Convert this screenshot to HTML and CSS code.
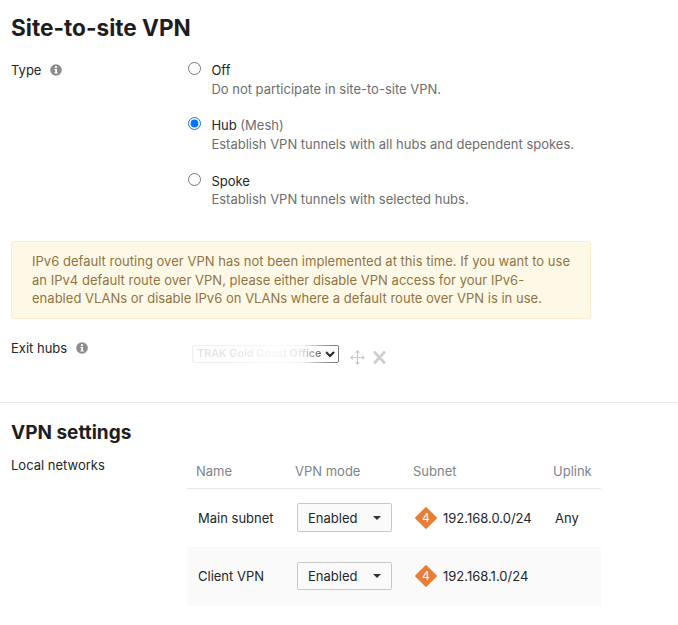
FILE: index.html
```html
<!DOCTYPE html>
<html lang="en">
<head>
    <meta charset="UTF-8">
    <meta name="viewport" content="width=device-width, initial-scale=1.0">
    <title>Site-to-site VPN</title>
    <link rel="stylesheet" href="styles.css">
</head>
<body>
    <!--* Type and exit hubs -->
    <div class="vpnSection">
      <h1>Site-to-site VPN</h1>
      <div class="formRow typeRow">
        <div class="rowLabel">
          <span>Type</span>
          <svg class="infoIcon" viewBox="0 0 12 12"><circle cx="6" cy="6" r="5.8" fill="#8c8c8c"/><rect x="5" y="2.2" width="2" height="1.8" fill="#fff"/><path d="M4.4 5h2.6v3.6h.8v1H4.4v-1h.8V6h-.8z" fill="#fff"/></svg>
        </div>
        <div class="radioList">
          <label class="radioItem">
            <input type="radio" name="vpnType">
            <span class="radioText">
              <span class="radioName">Off</span>
              <span class="radioHint">Do not participate in site-to-site VPN.</span>
            </span>
          </label>
          <label class="radioItem">
            <input type="radio" name="vpnType" checked>
            <span class="radioText">
              <span class="radioName">Hub <span class="radioNote">(Mesh)</span></span>
              <span class="radioHint">Establish VPN tunnels with all hubs and dependent spokes.</span>
            </span>
          </label>
          <label class="radioItem">
            <input type="radio" name="vpnType">
            <span class="radioText">
              <span class="radioName">Spoke</span>
              <span class="radioHint">Establish VPN tunnels with selected hubs.</span>
            </span>
          </label>
        </div>
      </div>
      <div class="warningBox">
        IPv6 default routing over VPN has not been implemented at this time. If you want to use
        an IPv4 default route over VPN, please either disable VPN access for your IPv6-
        enabled VLANs or disable IPv6 on VLANs where a default route over VPN is in use.
      </div>
      <div class="formRow exitRow">
        <div class="rowLabel">
          <span>Exit hubs</span>
          <svg class="infoIcon" viewBox="0 0 12 12"><circle cx="6" cy="6" r="5.8" fill="#8c8c8c"/><rect x="5" y="2.2" width="2" height="1.8" fill="#fff"/><path d="M4.4 5h2.6v3.6h.8v1H4.4v-1h.8V6h-.8z" fill="#fff"/></svg>
        </div>
        <div class="hubPicker">
          <select class="hubSelect"><option>TRAK Gold Coast Office</option></select>
          <svg class="moveIcon" viewBox="0 0 16 16"><path d="M8 2v12M2 8h12" fill="none" stroke="#c8c8c8" stroke-width="1.2"/><path d="M8 0l2.6 3H5.4zM8 16l2.6-3H5.4zM0 8l3-2.6v5.2zM16 8l-3-2.6v5.2z" fill="#c8c8c8"/></svg>
          <svg class="removeIcon" viewBox="0 0 13 13" fill="none" stroke="#cfcfcf" stroke-width="2.8"><path d="M1 .5l11 12M12 .5L1 12.5"/></svg>
        </div>
      </div>
    </div>
    <!--* VPN settings -->
    <div class="settingsSection">
      <h2>VPN settings</h2>
      <div class="formRow networksRow">
        <div class="rowLabel">Local networks</div>
        <table class="netTable">
          <thead>
            <tr><th class="nameCol">Name</th><th class="modeCol">VPN mode</th><th class="subnetCol">Subnet</th><th>Uplink</th></tr>
          </thead>
          <tbody>
            <tr>
              <td class="nameCell">Main subnet</td>
              <td><div class="modeButton">Enabled<span class="caret"></span></div></td>
              <td><div class="subnetCell"><span class="ipBadge"><span class="ipDigit">4</span></span>192.168.0.0/24</div></td>
              <td class="uplinkCell">Any</td>
            </tr>
            <tr class="altRow">
              <td class="nameCell">Client VPN</td>
              <td><div class="modeButton">Enabled<span class="caret"></span></div></td>
              <td><div class="subnetCell"><span class="ipBadge"><span class="ipDigit">4</span></span>192.168.1.0/24</div></td>
              <td></td>
            </tr>
          </tbody>
        </table>
      </div>
    </div>
</body>
</html>
```
FILE: styles.css
```css
:root {
    --text-color: #22262a;
    --hint-color: #6e6e6e;
    --head-color: #80838a;
    --line-color: #e8e8e8;
}
body {
    margin: 0;
    font: 13px Inter, "Liberation Sans", sans-serif;
    color: var(--text-color);
    background-color: #fff;
    overflow: hidden;
}
h1 {
    margin: 0;
    padding-top: 14px;
    font-size: 22.6px;
    line-height: 27px;
    font-weight: 700;
    color: #1e1e1e;
}
h2 {
    margin: 0;
    font-size: 19px;
    line-height: 22px;
    font-weight: 700;
    color: #1e1e1e;
}
.vpnSection {
    padding-left: 11px;
    height: 403px;
    box-sizing: border-box;
    border-bottom: 1px solid var(--line-color);
}
.settingsSection {
    padding: 19px 0 0 11px;
}
.formRow {
    display: flex;
}
.typeRow {
    padding-top: 21px;
}
.exitRow {
    padding-top: 21px;
}
.networksRow {
    padding-top: 13px;
}
.rowLabel {
    width: 176px;
    flex-shrink: 0;
    display: flex;
    align-items: flex-start;
    gap: 9px;
    line-height: 16px;
}
.infoIcon {
    width: 12px;
    height: 12px;
    margin-top: 2px;
}
.radioList {
    display: flex;
    flex-direction: column;
    gap: 20px;
}
.radioItem {
    display: flex;
    align-items: flex-start;
}
.radioItem:last-child {
    margin-top: 1px;
}
.radioItem:last-child .radioText {
    gap: 2px;
}
.radioItem input {
    width: 13px;
    height: 13px;
    margin: 0 10.4px 0 1px;
}
.radioText {
    display: flex;
    flex-direction: column;
    gap: 3px;
    line-height: 16px;
}
.radioNote {
    color: var(--hint-color);
}
.radioHint {
    color: var(--hint-color);
}
.warningBox {
    width: 541px;
    margin-top: 34px;
    padding: 10px 17px 10px 20px;
    line-height: 18.5px;
    letter-spacing: .023px;
    color: #8f7442;
    background-color: #fef9e7;
    border: 1px solid #fbeccb;
    border-radius: 3px;
}
.hubPicker {
    display: flex;
    align-items: flex-start;
    gap: 11px;
}
.hubSelect {
    width: 147px;
    height: 18px;
    margin: 5px 0 0 5px;
    padding: 0;
    font: 600 10.8px Inter, "Liberation Sans", sans-serif;
    color: #000;
    -webkit-mask-image: linear-gradient(to right, rgba(0,0,0,.12) 0%, rgba(0,0,0,.1) 30%, rgba(0,0,0,.03) 55%, rgba(0,0,0,.1) 75%, rgba(0,0,0,.8) 92%, #000 100%);
    mask-image: linear-gradient(to right, rgba(0,0,0,.12) 0%, rgba(0,0,0,.1) 30%, rgba(0,0,0,.03) 55%, rgba(0,0,0,.1) 75%, rgba(0,0,0,.8) 92%, #000 100%);
}
.moveIcon {
    width: 15px;
    height: 15px;
    margin: 10px -3px 0 0;
}
.removeIcon {
    width: 13px;
    height: 13px;
    margin-top: 11px;
}
.netTable {
    width: 414px;
    border-collapse: collapse;
    table-layout: fixed;
    margin-top: -4px;
}
.netTable th {
    height: 35px;
    padding: 2px 0 0 9px;
    box-sizing: border-box;
    text-align: left;
    font-weight: 400;
    color: var(--head-color);
    border-bottom: 1px solid var(--line-color);
}
.netTable td {
    height: 58px;
    padding: 0;
}
.nameCol {
    width: 99px;
}
.modeCol {
    width: 118px;
}
.subnetCol {
    width: 140px;
}
.nameCell {
    padding-left: 11px !important;
}
.uplinkCell {
    padding-left: 11px !important;
}
.altRow {
    background-color: #fafafa;
}
.altRow td {
    height: 59px;
}
.modeButton {
    display: flex;
    align-items: center;
    justify-content: space-between;
    box-sizing: border-box;
    width: 95px;
    height: 28.5px;
    margin-left: 11px;
    padding: 0 10px 0 10px;
    background-color: #fafafa;
    border: 1px solid #c8c8c8;
    border-radius: 2px;
}
.caret {
    border-left: 4px solid transparent;
    border-right: 4px solid transparent;
    border-top: 4px solid #333;
}
.subnetCell {
    display: flex;
    align-items: center;
    gap: 7px;
    padding-left: 12px;
}
.ipBadge {
    display: flex;
    align-items: center;
    justify-content: center;
    width: 16px;
    height: 16px;
    margin: 0 2px;
    background-color: #e67e38;
    border-radius: 1px;
    transform: rotate(45deg);
}
.ipDigit {
    color: #fff;
    font-size: 12px;
    line-height: 12px;
    transform: rotate(-45deg);
}
```
